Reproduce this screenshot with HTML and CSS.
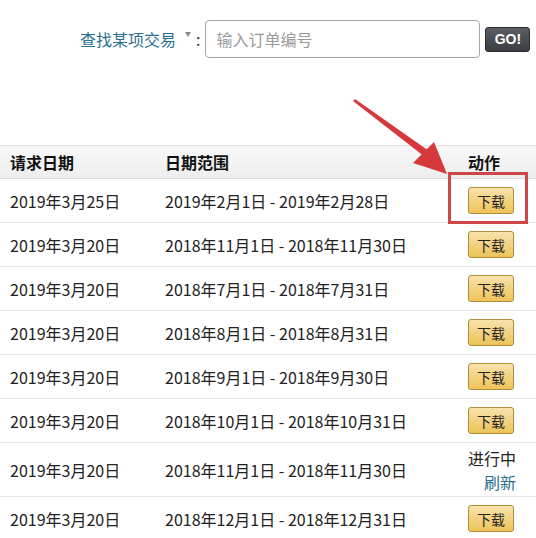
FILE: index.html
```html
<!DOCTYPE html>
<html lang="zh-CN">
<head>
    <meta charset="UTF-8">
    <meta name="viewport" content="width=device-width, initial-scale=1.0">
    <title>报告下载</title>
    <link rel="stylesheet" href="styles.css">
</head>
<body>
    <!-- 查找 -->
    <div class="buscar">
        <span class="etiqueta">查找某项交易</span>
        <span class="flecha-menu"></span>
        <span class="dos-puntos">:</span>
        <input class="entrada" type="text" placeholder="输入订单编号">
        <button class="go">GO!</button>
    </div>

    <table class="tabla">
        <colgroup>
            <col class="col-fecha">
            <col class="col-rango">
            <col class="col-accion">
        </colgroup>
        <thead>
            <tr>
                <th>请求日期</th>
                <th>日期范围</th>
                <th>动作</th>
            </tr>
        </thead>
        <tbody>
            <tr><td>2019年3月25日</td><td>2019年2月1日 - 2019年2月28日</td><td><button class="descargar">下载</button></td></tr>
            <tr><td>2019年3月20日</td><td>2018年11月1日 - 2018年11月30日</td><td><button class="descargar">下载</button></td></tr>
            <tr><td>2019年3月20日</td><td>2018年7月1日 - 2018年7月31日</td><td><button class="descargar">下载</button></td></tr>
            <tr><td>2019年3月20日</td><td>2018年8月1日 - 2018年8月31日</td><td><button class="descargar">下载</button></td></tr>
            <tr><td>2019年3月20日</td><td>2018年9月1日 - 2018年9月30日</td><td><button class="descargar">下载</button></td></tr>
            <tr><td>2019年3月20日</td><td>2018年10月1日 - 2018年10月31日</td><td><button class="descargar">下载</button></td></tr>
            <tr class="fila-alta">
                <td>2019年3月20日</td><td>2018年11月1日 - 2018年11月30日</td>
                <td><div class="estado">进行中<a href="#">刷新</a></div></td>
            </tr>
            <tr><td>2019年3月20日</td><td>2018年12月1日 - 2018年12月31日</td><td><button class="descargar">下载</button></td></tr>
        </tbody>
    </table>

    <!-- 标注 -->
    <div class="marco-rojo"></div>
    <svg class="flecha-roja" width="536" height="240" viewBox="0 0 536 240">
        <polygon points="353,101 355,99 429,151 425,157" fill="#d6393b"/>
        <polygon points="447,174 413,163 434,142" fill="#d6393b"/>
    </svg>
</body>
</html>
```

FILE: styles.css
```css
body {
    font-family: "Noto Sans CJK SC", "Noto Sans", sans-serif;
    margin: 0;
    padding: 0;
    background-color: #fff;
    color: #222;
    position: relative;
}

.buscar {
    display: flex;
    align-items: center;
    padding: 20px 0 0 80px;
    height: 38px;
}

.etiqueta {
    color: #2a6f8f;
    font-size: 16px;
}

.flecha-menu {
    width: 0;
    height: 0;
    border-left: 3px solid transparent;
    border-right: 3px solid transparent;
    border-top: 5px solid #888;
    margin: 0 5px 10px 9px;
}

.dos-puntos {
    font-size: 16px;
    margin-right: 5px;
    color: #333;
}

.entrada {
    box-sizing: border-box;
    width: 275px;
    height: 38px;
    border: 1px solid #a6a6a6;
    border-radius: 4px;
    padding: 0 10px;
    font-family: inherit;
    font-size: 16px;
    color: #333;
}

.entrada::placeholder {
    color: #999;
}

.go {
    width: 45px;
    height: 25px;
    margin-left: 5px;
    border: 1px solid #2c2e31;
    border-radius: 3px;
    background: linear-gradient(#5a5e64, #3a3d42);
    color: #fff;
    font-family: "Liberation Sans", Arial, sans-serif;
    font-weight: bold;
    font-size: 14px;
    padding: 0;
}

.tabla {
    width: 100%;
    margin-top: 87px;
    border-collapse: collapse;
    table-layout: fixed;
    font-size: 16px;
}

.col-fecha { width: 155px; }
.col-rango { width: 303px; }

.tabla th {
    height: 32px;
    text-align: left;
    font-weight: bold;
    padding: 0 0 0 10px;
    background: linear-gradient(#f8f8f8, #ededed);
    border-top: 1px solid #e3e3e3;
    border-bottom: 1px solid #dcdcdc;
    color: #111;
}

.tabla td {
    height: 43px;
    padding: 0 0 0 10px;
    border-bottom: 1px solid #e6e6e6;
    white-space: nowrap;
}

.tabla .fila-alta td {
    height: 53px;
}

.descargar {
    width: 46px;
    height: 27px;
    padding: 0;
    border: 1px solid #b08c38;
    border-radius: 3px;
    background: linear-gradient(#f8e3ad, #eec358);
    color: #222;
    font-family: inherit;
    font-size: 14px;
}

.estado {
    display: flex;
    flex-direction: column;
    align-items: flex-end;
    width: 48px;
    line-height: 24px;
}

.estado a {
    color: #2a6f8f;
    text-decoration: none;
}

.marco-rojo {
    position: absolute;
    left: 448px;
    top: 172px;
    width: 74px;
    height: 46px;
    border: 3px solid #cf4649;
}

.flecha-roja {
    position: absolute;
    left: 0;
    top: 0;
}
```
